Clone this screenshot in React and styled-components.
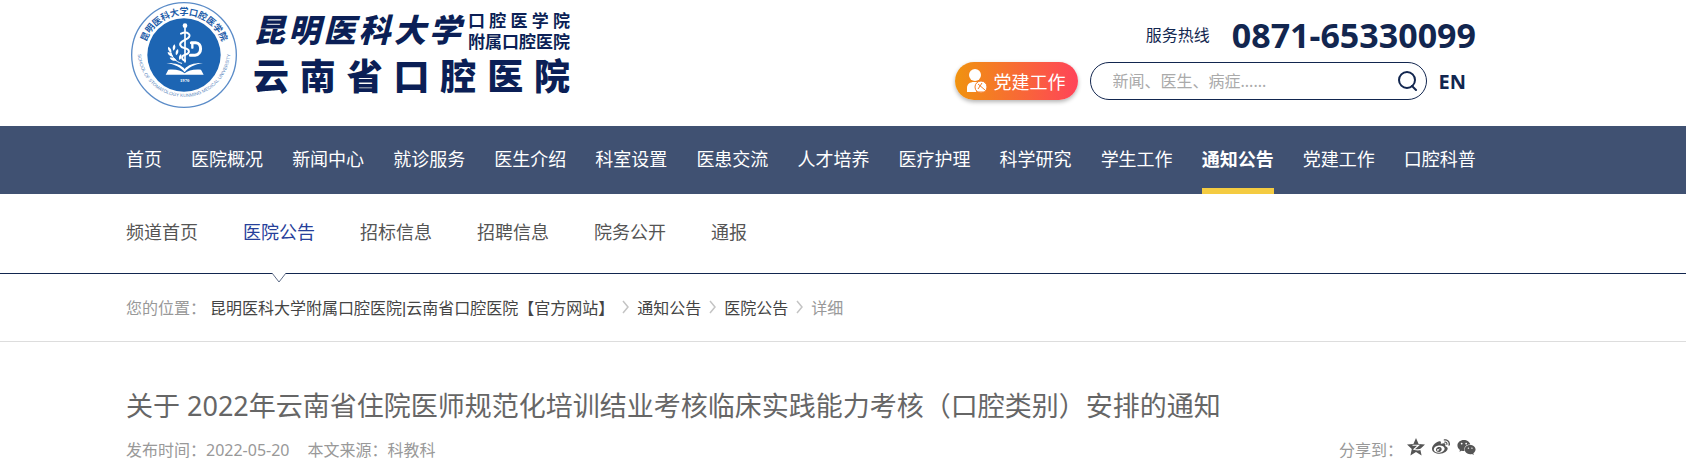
import React from 'react'
import styled, { createGlobalStyle } from 'styled-components'
import { FaWeibo, FaWeixin } from 'react-icons/fa'

const mainLinks = ['首页', '医院概况', '新闻中心', '就诊服务', '医生介绍', '科室设置', '医患交流', '人才培养', '医疗护理', '科学研究', '学生工作', '通知公告', '党建工作', '口腔科普']
const subLinks = ['频道首页', '医院公告', '招标信息', '招聘信息', '院务公开', '通报']

function Emblem() {
  return (
    <EmblemSvg viewBox="0 0 330 330" role="img" aria-label="校徽">
      <defs>
        <path id="ringTop" d="M45 165 A120 120 0 0 1 285 165" />
        <path id="ringBottom" d="M26 152 A139 139 0 1 0 304 152" />
      </defs>
      <circle cx="165" cy="165" r="157" fill="#fff" stroke="#5b8cc8" strokeWidth="4" />
      <circle cx="165" cy="165" r="110" fill="#1d65b3" />
      <text fill="#1d5ca8" fontSize="27" fontWeight="700" textAnchor="middle">
        <textPath href="#ringTop" startOffset="50%">昆明医科大学口腔医学院</textPath>
      </text>
      <text fill="#5b86bd" fontSize="14" fontFamily="Liberation Sans, sans-serif" textAnchor="middle">
        <textPath href="#ringBottom" startOffset="50%">SCHOOL OF STOMATOLOGY KUNMING MEDICAL UNIVERSITY</textPath>
      </text>
      <g fill="none" stroke="#fff" strokeLinecap="round" strokeLinejoin="round">
        <path d="M168 84 V186" strokeWidth="5" />
        <path d="M156 101 C176 92 190 106 176 115 L160 124 C148 132 154 142 166 144 C184 148 184 160 168 164 C156 168 157 178 168 182" strokeWidth="6" />
        <path d="M187 128 H200 C220 129 220 164 198 166 H184" strokeWidth="9" />
        <path d="M190 130 V143" strokeWidth="7" />
        <path d="M158 190 C140 186 128 172 124 151" strokeWidth="3" />
      </g>
      <g fill="#fff">
        <circle cx="168" cy="77" r="7" />
        <path d="M126 158 C116 152 116 144 118 140 C126 144 129 151 126 158Z" />
        <path d="M133 152 C129 144 132 136 137 133 C141 142 139 148 133 152Z" />
        <path d="M132 171 C121 169 116 163 116 156 C126 157 131 163 132 171Z" />
        <path d="M141 166 C138 157 141 150 147 147 C150 156 147 162 141 166Z" />
        <path d="M143 182 C132 184 125 179 122 173 C133 171 139 175 143 182Z" />
        <path d="M151 180 C148 172 151 165 156 162 C160 171 157 176 151 180Z" />
        <path d="M112 189 C137 188 157 194 167 207 C177 194 197 188 222 189 C197 193 178 202 167 217 C156 202 137 193 112 189Z" />
        <path d="M118 209 C140 207 157 211 167 220 C177 211 194 207 216 209 L224 224 H110Z" />
      </g>
      <text x="167" y="247" fill="#fff" fontSize="14" fontWeight="700" fontFamily="Liberation Serif, serif" textAnchor="middle">1970</text>
    </EmblemSvg>
  )
}

const Spread = ({ text }) => text.split('').map((c, i) => <span key={i}>{c}</span>)

function Header() {
  return (
    <Top>
      <Logo href="#">
        <Emblem />
        <LogoText>
          <LogoUpper>
            <School><Spread text="昆明医科大学" /></School>
            <Branch>
              <BranchLine><Spread text="口腔医学院" /></BranchLine>
              <BranchLine><Spread text="附属口腔医院" /></BranchLine>
            </Branch>
          </LogoUpper>
          <Hospital><Spread text="云南省口腔医院" /></Hospital>
        </LogoText>
      </Logo>
      <Tools>
        <Hotline>
          <span>服务热线</span>
          <Phone>0871-65330099</Phone>
        </Hotline>
        <ToolRow>
          <PartyLink href="#">
            <svg width="22" height="24" viewBox="0 0 22 24" fill="#fff" aria-hidden="true">
              <circle cx="9" cy="6" r="6" />
              <path d="M1 23 V19 C1 15 4 13 8 13 H11 L10 23Z" />
              <circle cx="15" cy="18" r="6" stroke="#f47c25" />
              <path d="M12 15 L19 21 M16 14 L12 20 M12 23 H18" stroke="#f47c25" strokeWidth="1" />
            </svg>
            党建工作
          </PartyLink>
          <Search onSubmit={(e) => e.preventDefault()}>
            <SearchInput type="text" placeholder="新闻、医生、病症......" aria-label="搜索" />
            <SearchBtn type="submit" aria-label="提交搜索">
              <svg width="20" height="20" viewBox="0 0 20 20" fill="none" stroke="#12264f" strokeWidth="2" strokeLinecap="round">
                <circle cx="9" cy="9" r="8" />
                <path d="M14 15 L18 19" />
              </svg>
            </SearchBtn>
          </Search>
          <Lang href="#">EN</Lang>
        </ToolRow>
      </Tools>
    </Top>
  )
}

function Chevron() {
  return (
    <svg width="7" height="14" viewBox="0 0 7 14" fill="none" stroke="#c4c4c4" strokeWidth="1.5" aria-hidden="true">
      <path d="M1 1 L6 7 L1 13" />
    </svg>
  )
}

function App() {
  return (
    <>
      <GlobalStyle />
      <Header />
      <NavBar>
        {mainLinks.map((t) => (
          <NavLink href="#" key={t} $active={t === '通知公告'}>{t}</NavLink>
        ))}
      </NavBar>
      <SubNav>
        {subLinks.map((t) => (
          <SubLink href="#" key={t} $active={t === '医院公告'}>
            {t}
            {t === '医院公告' && (
              <Notch width="16" height="10" viewBox="0 0 16 10" aria-hidden="true">
                <path d="M1 0 H15 V1 L8 9 L1 1Z" fill="#fff" />
                <path d="M1 0 L8 9 L15 0" fill="none" stroke="#5f6c88" />
              </Notch>
            )}
          </SubLink>
        ))}
      </SubNav>
      <Crumbs>
        <CrumbStart>
          <span>您的位置：</span>
          <CrumbLink href="#">昆明医科大学附属口腔医院<Bar>|</Bar>云南省口腔医院【官方网站】</CrumbLink>
        </CrumbStart>
        <Chevron />
        <CrumbLink href="#">通知公告</CrumbLink>
        <Chevron />
        <CrumbLink href="#">医院公告</CrumbLink>
        <Chevron />
        <span>详细</span>
      </Crumbs>
      <Article>
        <Title>关于 2022年云南省住院医师规范化培训结业考核临床实践能力考核（口腔类别）安排的通知</Title>
        <Meta>
          <span>发布时间：2022-05-20</span>
          <span>本文来源：科教科</span>
          <Share>
            <span>分享到：</span>
            <ShareIcons>
              <ShareLink href="#" aria-label="QQ空间">
                <svg width="18" height="18" viewBox="0 0 18 18">
                  <path d="M9 0 L11.6 6 L18 6.6 L13.2 10.9 L14.6 17.4 L9 14 L3.4 17.4 L4.8 10.9 L0 6.6 L6.4 6Z" fill="#555" />
                  <path d="M5.5 7.2 H11.6 L7 11.3 C9.5 12 12 12 14 11.4" fill="none" stroke="#fff" strokeWidth="1.1" />
                </svg>
              </ShareLink>
              <ShareLink href="#" aria-label="微博"><FaWeibo size={18} /></ShareLink>
              <ShareLink href="#" aria-label="微信"><FaWeixin size={19} /></ShareLink>
            </ShareIcons>
          </Share>
        </Meta>
      </Article>
    </>
  )
}

export default App

const GlobalStyle = createGlobalStyle`
*{
    box-sizing:border-box;
}
body{
    margin:0;
    background:#fff;
    font-family:"Noto Sans", "Noto Sans CJK SC", sans-serif;
    font-size:16px;
    color:#999;
}
a{
    color:inherit;
    text-decoration:none;
}
`

const Section = styled.div`
padding:0 210px 0 126px;
white-space:nowrap;
`

const Top = styled(Section).attrs({ as: 'header' })`
display:flex;
justify-content:space-between;
align-items:flex-start;
color:#12264f;
`

const Logo = styled.a`
display:flex;
gap:14px;
padding-left:3px;
color:#0b1f56;
`

const EmblemSvg = styled.svg`
width:110px;
height:110px;
`

const LogoText = styled.div`
display:flex;
flex-direction:column;
width:317px;
padding-top:10px;
`

const LogoUpper = styled.div`
display:flex;
justify-content:space-between;
`

const School = styled.div`
display:flex;
justify-content:space-between;
width:208px;
font-size:32px;
font-style:italic;
font-weight:900;
line-height:40px;
`

const Branch = styled.div`
width:102px;
font-size:17px;
font-weight:700;
line-height:21px;
`

const BranchLine = styled.div`
display:flex;
justify-content:space-between;
`

const Hospital = styled.div`
display:flex;
justify-content:space-between;
font-size:36px;
font-weight:900;
line-height:50px;
`

const Tools = styled.div`
display:flex;
flex-direction:column;
gap:4px;
padding:12px 0 26px;
`

const Hotline = styled.div`
display:flex;
justify-content:flex-end;
align-items:center;
gap:22px;
line-height:46px;
`

const Phone = styled.strong`
font-size:34px;
`

const ToolRow = styled.div`
display:flex;
align-items:center;
gap:12px;
padding-right:10px;
`

const PartyLink = styled.a`
display:flex;
align-items:center;
gap:6px;
height:38px;
padding:0 12px 0 11px;
border-radius:19px;
background:linear-gradient(90deg, #f0930f, #ff4359);
box-shadow:0 2px 4px rgba(0,0,0,0.3);
color:#fff;
font-size:18px;
`

const Search = styled.form`
display:flex;
align-items:center;
width:337px;
height:38px;
padding:0 8px 0 22px;
border:1px solid #12264f;
border-radius:19px;
`

const SearchInput = styled.input`
flex:1;
min-width:0;
padding:0;
border:none;
outline:none;
background:none;
font:inherit;
color:#333;

&::placeholder{
    color:#aaa;
}
`

const SearchBtn = styled.button`
display:flex;
padding:0;
border:none;
background:none;
cursor:pointer;
`

const Lang = styled.a`
font-size:20px;
font-weight:700;
`

const NavBar = styled(Section).attrs({ as: 'nav' })`
display:flex;
justify-content:space-between;
background:#405172;
`

const NavLink = styled.a`
height:68px;
border-bottom:6px solid ${(p) => (p.$active ? '#f4cb41' : 'transparent')};
color:#fff;
font-size:18px;
font-weight:${(p) => (p.$active ? 700 : 400)};
line-height:66px;
`

const SubNav = styled(Section).attrs({ as: 'nav' })`
display:flex;
gap:45px;
border-bottom:1px solid #12264f;
`

const SubLink = styled.a`
position:relative;
height:79px;
color:${(p) => (p.$active ? '#26409a' : '#555')};
font-size:18px;
line-height:76px;
`

const Notch = styled.svg`
position:absolute;
top:79px;
left:50%;
transform:translateX(-50%);
`

const Crumbs = styled(Section).attrs({ as: 'nav' })`
display:flex;
align-items:center;
gap:8px;
height:68px;
padding-bottom:2px;
border-bottom:1px solid #ddd;
`

const CrumbStart = styled.div`
display:flex;
gap:4px;
`

const CrumbLink = styled.a`
color:#444;
`

const Bar = styled.span`
font-family:"Liberation Sans", sans-serif;
`

const Article = styled(Section).attrs({ as: 'article' })`
padding-top:44px;
`

const Title = styled.h1`
margin:0;
color:#666;
font-size:27px;
font-weight:400;
line-height:40px;
`

const Meta = styled.div`
display:flex;
gap:18px;
padding-top:12px;
line-height:24px;
`

const Share = styled.div`
display:flex;
gap:4px;
margin-left:auto;
`

const ShareIcons = styled.div`
display:flex;
align-items:flex-start;
gap:7px;
`

const ShareLink = styled.a`
display:flex;
color:#555;
`
